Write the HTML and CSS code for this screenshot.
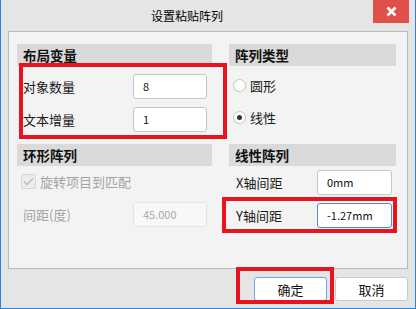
FILE: index.html
```html
<!DOCTYPE html>
<html lang="zh-CN">
<head>
    <meta charset="UTF-8">
    <title>设置粘贴阵列</title>
    <link rel="stylesheet" href="styles.css">
</head>
<body>
    <div class="window">
        <div class="titlebar">
            <div class="title">设置粘贴阵列</div>
            <div class="close">
                <svg width="11" height="11" viewBox="0 0 11 11"><path d="M1.5 1.5 L9.5 9.5 M9.5 1.5 L1.5 9.5" stroke="#fff" stroke-width="2.6"/></svg>
            </div>
        </div>

        <div class="panel">
            <div class="group">
                <div class="group-title">布局变量</div>
                <div class="row first-8">
                    <span class="label">对象数量</span>
                    <div class="input">8</div>
                </div>
                <div class="row gap-8">
                    <span class="label">文本增量</span>
                    <div class="input">1</div>
                </div>
            </div>

            <div class="group right">
                <div class="group-title">阵列类型</div>
                <div class="row first-7 opt">
                    <span class="radio"></span>
                    <span>圆形</span>
                </div>
                <div class="row first-7 opt">
                    <span class="radio checked"></span>
                    <span>线性</span>
                </div>
            </div>

            <div class="group">
                <div class="group-title">环形阵列</div>
                <div class="row first-3 opt disabled">
                    <span class="check">
                        <svg width="11" height="9" viewBox="0 0 11 9"><path d="M1 4.5 L4 7.5 L10 1.5" fill="none" stroke="#b9b9b9" stroke-width="1.3"/></svg>
                    </span>
                    <span>旋转项目到匹配</span>
                </div>
                <div class="row gap-8 disabled">
                    <span class="label">间距(度)</span>
                    <div class="input off">45.000</div>
                </div>
            </div>

            <div class="group right">
                <div class="group-title">线性阵列</div>
                <div class="row first-4">
                    <span class="label">X轴间距</span>
                    <div class="input">0mm</div>
                </div>
                <div class="row gap-8">
                    <span class="label">Y轴间距</span>
                    <div class="input focus">-1.27mm</div>
                </div>
            </div>
        </div>

        <div class="footer">
            <button class="btn default">确定</button>
            <button class="btn">取消</button>
        </div>

        <div class="mark mark-vars"></div>
        <div class="mark mark-y"></div>
        <div class="mark mark-ok"></div>
    </div>
</body>
</html>
```

FILE: styles.css
```css
body { margin: 0; background: #fff; }
.window {
    position: relative;
    width: 416px;
    height: 309px;
    box-sizing: border-box;
    border: 1px solid #2b84dc;
    border-top: 0;
    background: #e5e5e5;
    font-family: "Noto Sans CJK SC", "Microsoft YaHei", sans-serif;
    font-size: 13px;
    color: #1a1a1a;
    display: flex;
    flex-direction: column;
}
.titlebar { display: flex; height: 31px; }
.title { flex: 1; text-align: center; font-size: 12px; line-height: 31px; color: #000; }
.close {
    width: 36px;
    height: 23px;
    margin-right: 6px;
    background: #e0504a;
    display: flex;
    align-items: center;
    justify-content: center;
}

.panel {
    height: 238px;
    margin: 0 7px;
    box-sizing: border-box;
    border: 1px solid #b9b9b9;
    background: #f3f3f3;
    padding: 12px 11px 0 8px;
    display: grid;
    grid-template-columns: 195px 167px;
    grid-template-rows: 100px 100px;
    column-gap: 17px;
}
.group-title {
    height: 22px;
    line-height: 22px;
    padding-left: 6px;
    background: #dadada;
    font-weight: bold;
    font-size: 13.5px;
    color: #111;
}
.row { display: flex; align-items: center; height: 25px; padding-left: 6px; }
.right .row { padding-left: 7px; }
.row.opt { padding-left: 4px; }
.first-3 { margin-top: 3px; }
.first-4 { margin-top: 4px; }
.first-7 { margin-top: 7px; }
.first-8 { margin-top: 8px; }
.gap-8 { margin-top: 8px; }

.label { width: 110px; flex-shrink: 0; }
.right .label { width: 81px; }

.input {
    width: 74px;
    height: 25px;
    box-sizing: border-box;
    border: 1px solid #c6c6c6;
    border-radius: 3px;
    background: #fff;
    padding-left: 9px;
    font-size: 11px;
    line-height: 23px;
    color: #111;
}
.right .input { width: 75px; }
.input.focus { border-color: #4a8fd6; }
.input.off { border-color: #e4e4e4; background: #f8f8f8; color: #a8a8a8; }

.radio {
    width: 13px;
    height: 13px;
    box-sizing: border-box;
    border: 1px solid #c4c4c4;
    border-radius: 50%;
    background: #fff;
    margin-right: 4px;
    display: flex;
    align-items: center;
    justify-content: center;
}
.radio.checked::after {
    content: '';
    width: 5px;
    height: 5px;
    border-radius: 50%;
    background: #333;
}
.check {
    width: 15px;
    height: 15px;
    box-sizing: border-box;
    border: 1px solid #d6d6d6;
    border-radius: 2px;
    background: #ececec;
    margin-right: 4px;
    display: flex;
    align-items: center;
    justify-content: center;
}
.disabled { color: #a3a3a3; }

.footer { display: flex; justify-content: flex-end; gap: 8px; padding: 8px 7px 0 0; }
.btn {
    width: 73px;
    height: 24px;
    border: 1px solid #cacaca;
    border-radius: 3px;
    background: #fff;
    font-family: inherit;
    font-size: 13px;
    color: #111;
    padding: 0;
}
.btn.default { border-color: #6aa6e3; }

.mark {
    position: absolute;
    box-sizing: border-box;
    border: 4px solid #e8131e;
    pointer-events: none;
}
.mark-vars { left: 18px; top: 63px; width: 208px; height: 76px; }
.mark-y { left: 221px; top: 197px; width: 175px; height: 36px; }
.mark-ok { left: 235px; top: 267px; width: 98px; height: 37px; }
```
